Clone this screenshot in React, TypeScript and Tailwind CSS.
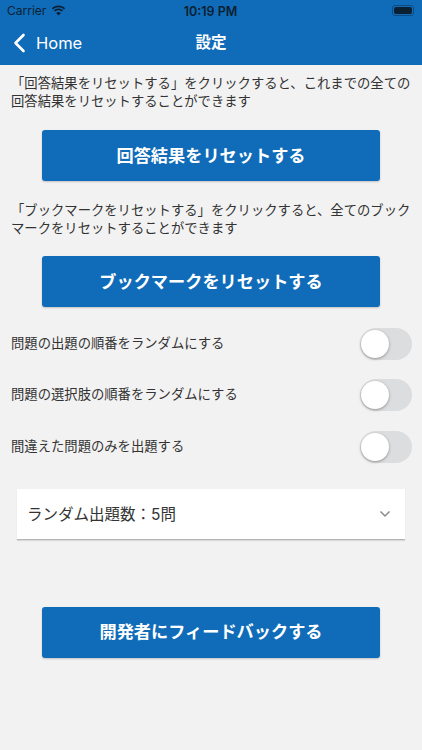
import { type FC } from 'react';

const font = { fontFamily: '"Inter", "Noto Sans CJK JP", sans-serif' };

const ActionButton: FC<{ label: string }> = ({ label }) => (
  <div className="mx-[42px] h-[51px] rounded-[3px] bg-[#106cb8] flex items-center justify-center text-white text-[17.2px] font-bold shadow-[0_1px_2px_rgba(0,0,0,0.2)]">
    {label}
  </div>
);

const ToggleRow: FC<{ label: string }> = ({ label }) => (
  <div className="h-[32px] pl-[11px] pr-[10px] flex items-center justify-between">
    <span className="text-[13.33px] text-[#333333]">{label}</span>
    <div className="w-[52px] h-[32px] rounded-full bg-[#dcdddf] flex items-center pl-[1px]">
      <div className="w-[28px] h-[28px] rounded-full bg-white shadow-[0_1px_3px_rgba(0,0,0,0.35)]" />
    </div>
  </div>
);

export default function App() {
  return (
    <div className="w-[422px] h-[750px] bg-[#f2f2f2] overflow-hidden flex flex-col" style={font}>
      <div className="h-[65px] bg-[#106cb8] flex flex-col shrink-0">
        <div className="h-[21px] pl-[7px] pr-[8px] flex items-center justify-between text-[12px] text-[#0b1f33]">
          <div className="flex items-center gap-[6px] w-[120px]">
            <span className="mt-[1px]">Carrier</span>
            <svg className="-ml-[1px]" width="15" height="11" viewBox="0 0 15 11" fill="#0b1f33">
              <path d="M7.5 2.3c2.1 0 4 .8 5.5 2.2l1.100-1.200C12.300 1.600 10 .6 7.500 .6S2.700 1.600.9 3.300L2 4.500c1.500-1.400 3.400-2.200 5.500-2.200z" />
              <path d="M7.500 5.300c1.300 0 2.500.5 3.400 1.300l1.100-1.200c-1.200-1.100-2.800-1.800-4.500-1.800s-3.300.7-4.500 1.800l1.100 1.200c.9-.8 2.100-1.300 3.400-1.300z" />
              <path d="M7.500 10.500l2.300-2.500c-.6-.6-1.400-.9-2.300-.9s-1.700.3-2.300.9z" />
            </svg>
          </div>
          <span className="mt-[3px] font-semibold text-[12.5px]">10:19 PM</span>
          <div className="w-[120px] flex justify-end items-center">
            <div className="w-[22px] h-[11px] rounded-[3px] border border-[#0b1f33]/40 p-[1px]">
              <div className="w-full h-full rounded-[2px] bg-[#0b1f33]" />
            </div>
          </div>
        </div>
        <div className="relative flex-1 flex items-center text-white">
          <svg className="ml-[13px]" width="13" height="20" viewBox="0 0 13 20" fill="none" stroke="white" strokeWidth="2.6" strokeLinecap="round" strokeLinejoin="round">
            <path d="M10.5 2 L2.5 10 L10.5 18" />
          </svg>
          <span className="ml-[10px] text-[16.5px]">Home</span>
          <span className="absolute left-0 right-0 text-center text-[15.5px] font-bold">設定</span>
        </div>
      </div>

      <p className="mt-[9px] px-[11px] text-[13.33px] leading-[18px] text-[#333333]">「回答結果をリセットする」をクリックすると、これまでの全ての回答結果をリセットすることができます</p>
      <div className="mt-[20px]"><ActionButton label="回答結果をリセットする" /></div>

      <p className="mt-[20px] px-[11px] text-[13.33px] leading-[18px] text-[#333333]">「ブックマークをリセットする」をクリックすると、全てのブックマークをリセットすることができます</p>
      <div className="mt-[19px]"><ActionButton label="ブックマークをリセットする" /></div>

      <div className="mt-[21px] flex flex-col gap-[19.4px]">
        <ToggleRow label="問題の出題の順番をランダムにする" />
        <ToggleRow label="問題の選択肢の順番をランダムにする" />
        <ToggleRow label="間違えた問題のみを出題する" />
      </div>

      <div className="mt-[26px] mx-[17px] w-[388px] h-[51px] bg-white border-b border-[#b5b5b5] shadow-[0_1px_1px_rgba(0,0,0,0.1)] pl-[10px] pr-[14px] flex items-center justify-between">
        <span className="mt-[2px] text-[15.5px] text-[#333333]">ランダム出題数：5問</span>
        <svg width="12" height="8" viewBox="0 0 12 8" fill="none" stroke="#8a8a8a" strokeWidth="1.5">
          <path d="M1.5 1.5 L6 6 L10.5 1.5" />
        </svg>
      </div>

      <div className="mt-[67px]"><ActionButton label="開発者にフィードバックする" /></div>
    </div>
  );
}
